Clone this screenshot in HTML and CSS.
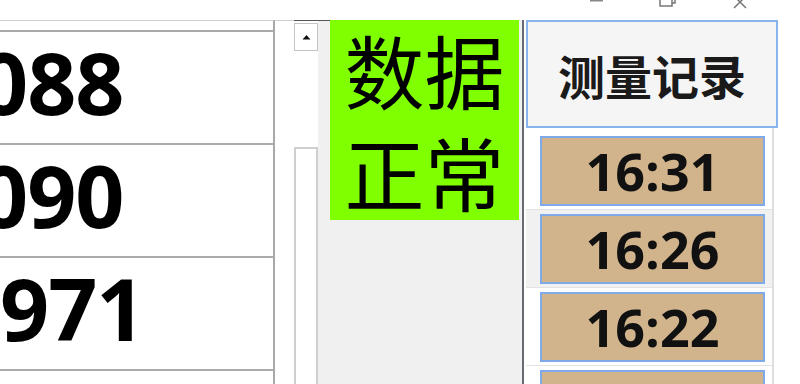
FILE: index.html
```html
<!DOCTYPE html>
<html>

<head>
    <title>测量</title>
    <meta charset="utf-8">
    <meta name="viewport" content="width=device-width, initial-scale=1.0">

    <link rel="stylesheet" href="styles.css">
</head>

<body>

    <div class="titlebar">
        <svg width="800" height="20" viewBox="0 0 800 20">
            <rect x="590" y="0" width="13" height="1.5" fill="#888"></rect>
            <path d="M660 0 V6 H672 V0 M672 3 H675 V0" fill="none" stroke="#777" stroke-width="1.5"></path>
            <path d="M734 -4 L746 8 M746 -4 L734 8" fill="none" stroke="#777" stroke-width="1.5"></path>
        </svg>
    </div>

    <div class="main">

        <section class="grid">
            <div class="ghead"></div>
            <div class="row"><span class="val cut">088</span></div>
            <div class="row"><span class="val cut">090</span></div>
            <div class="row"><span class="val">971</span></div>
            <div class="row"></div>
        </section>

        <div class="scroll">
            <div class="sgap"></div>
            <div class="strack">
                <div class="sup">
                    <svg width="9" height="6" viewBox="0 0 9 6"><path d="M0.5 5.5 L4.5 1 L8.5 5.5 Z" fill="#111"></path></svg>
                </div>
                <div class="thumb"></div>
            </div>
            <div class="sedge"></div>
        </div>

        <div class="status">
            <div class="ok">
                <div class="okline">数据</div>
                <div class="okline">正常</div>
            </div>
        </div>

        <section class="records">
            <button class="head">测量记录</button>
            <div class="list">
                <div class="item"><button class="time">16:31</button></div>
                <div class="item hover"><button class="time">16:26</button></div>
                <div class="item"><button class="time">16:22</button></div>
                <div class="item"><button class="time">16:18</button></div>
            </div>
        </section>

    </div>

</body></html>
```

FILE: styles.css
```css
html,
body {
    margin: 0;
    width: 800px;
    height: 384px;
    overflow: hidden;
    background-color: white;
    font-family: "Open Sans", "Noto Sans CJK SC", sans-serif;
}

.titlebar {
    height: 20px;
}

.titlebar svg {
    display: block;
}

.main {
    display: flex;
    height: 364px;
    overflow: hidden;
    align-items: flex-start;
}

/* left value grid */
.grid {
    width: 275px;
    height: 364px;
    border-right: 2px solid #a9a9a9;
    border-top: 1px solid #cfcfcf;
    box-sizing: border-box;
    overflow: hidden;
}

.ghead {
    height: 9px;
    border-bottom: 2px solid #a9a9a9;
}

.row {
    height: 111px;
    border-bottom: 2px solid #ababab;
    overflow: hidden;
    white-space: nowrap;
}

.val {
    display: block;
    font-size: 86px;
    font-weight: 700;
    line-height: 99px;
    color: black;
    letter-spacing: -1px;
}

.cut {
    margin-left: -21px;
}

/* scrollbar */
.scroll {
    display: flex;
    width: 55px;
    height: 364px;
    box-sizing: border-box;
}

.sgap {
    width: 19px;
    border-top: 1px solid #cfcfcf;
}

.strack {
    width: 24px;
    display: flex;
    flex-direction: column;
    border-top: 1px solid #555;
}

.sup {
    margin-top: 2px;
    height: 26px;
    border: 1px solid #c4c4c4;
    display: flex;
    align-items: center;
    justify-content: center;
}

.thumb {
    margin-top: 96px;
    flex: 1;
    border: 2px solid #cfcfcf;
    border-bottom: none;
}

.sedge {
    flex: 1;
    background-color: #f0f0f0;
    border-top: 1px solid #555;
}

/* status */
.status {
    width: 192px;
    height: 364px;
    background-color: #f0f0f0;
    border-right: 2px solid #666b73;
}

.ok {
    width: 189px;
    height: 200px;
    background-color: #7fff00;
    font-family: "Noto Sans CJK SC", sans-serif;
    font-size: 80px;
    text-align: center;
    color: black;
}

.okline {
    height: 102px;
    line-height: 96px;
}

/* records */
.records {
    margin-left: 2px;
    width: 252px;
}

.head {
    display: flex;
    align-items: center;
    justify-content: center;
    width: 100%;
    height: 108px;
    margin: 0;
    padding: 0;
    border: 2px solid #88b4ee;
    background-color: #f5f5f5;
    font-family: "Noto Sans CJK SC", sans-serif;
    font-size: 47px;
    font-weight: 700;
    color: #1a1a1a;
}

.list {
    padding-top: 4px;
    margin-right: 4px;
    border-right: 2px solid #dedede;
}

.item {
    padding: 4px 7px 3px 14px;
    border-bottom: 1px solid #e3e3e3;
}

.hover {
    background-color: #f1f1f1;
}

.time {
    display: block;
    width: 100%;
    height: 70px;
    margin: 0;
    padding: 0;
    border: 2px solid #80a9ea;
    background-color: #d2b48c;
    font-family: "Open Sans", sans-serif;
    font-size: 52px;
    font-weight: 700;
    line-height: 64px;
    color: #111;
}
```
